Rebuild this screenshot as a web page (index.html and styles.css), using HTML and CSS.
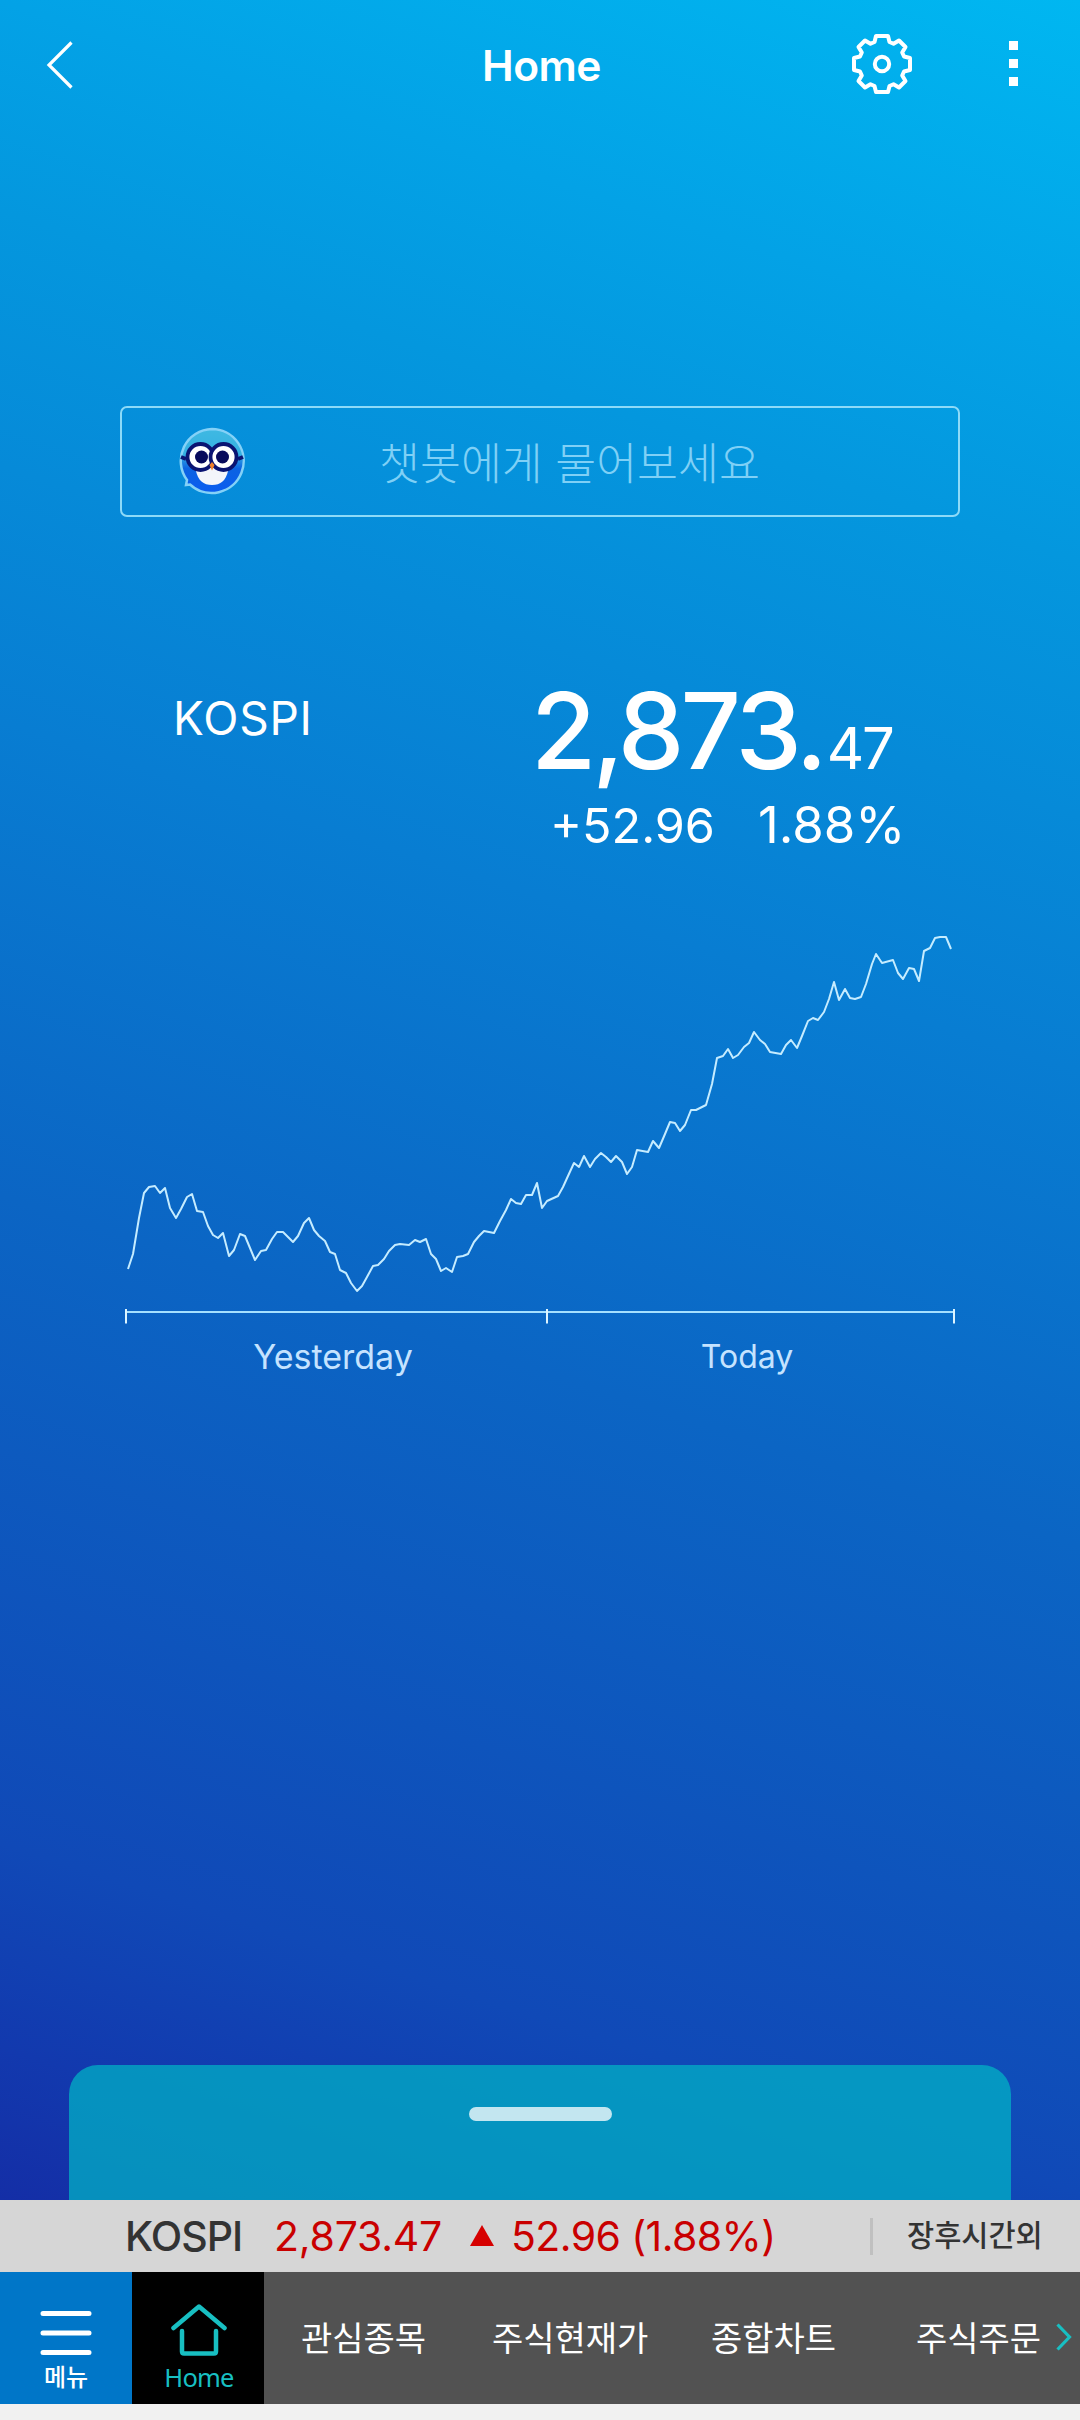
FILE: index.html
```html
<!DOCTYPE html>
<html lang="ko">
<head>
<meta charset="utf-8">
<title>Home</title>
<link rel="stylesheet" href="styles.css">
</head>
<body>
<div class="app">
  <main class="screen">
    <header class="topbar">
      <svg class="back" viewBox="0 0 28 48"><path d="M25.500 1.500 3 24 25.500 46.500"/></svg>
      <h1><span class="fit title">Home</span></h1>
      <svg class="gear" viewBox="0 0 60 60"><path d="M24 2h12l1.500 6 4 1.800 5.500-3.300 6.500 6.500-3.300 5.500 1.800 4 6 1.500v12l-6 1.500-1.800 4 3.300 5.500-6.500 6.500-5.500-3.300-4 1.800-1.500 6H24l-1.500-6-4-1.800-5.500 3.300L6.500 47l3.300-5.500-1.800-4L2 36V24l6-1.500 1.800-4L6.500 13 13 6.500l5.500 3.300 4-1.800z"/><circle cx="30" cy="30" r="7.200"/></svg>
      <svg class="more" viewBox="0 0 9 45"><path d="M0 0h9v9H0zM0 18h9v9H0zM0 36h9v9H0z"/></svg>
    </header>

    <div class="chatbot">
      <svg class="owl" viewBox="0 0 68 68">
        <defs><linearGradient id="body" x1="0" y1="0" x2="0" y2="1"><stop offset="0" stop-color="#3fb9e2"/><stop offset=".4" stop-color="#34b0e2"/><stop offset=".62" stop-color="#0c63e2"/><stop offset="1" stop-color="#0a5cf0"/></linearGradient></defs>
        <path d="M34 2a32 32 0 1 1-22 55.500l-4 .5 1-5A32 32 0 0 1 34 2z" fill="url(#body)" stroke="#84d1f7" stroke-width="2.500"/>
        <path d="M18 44q16-11 32 0-3 14-16 14T18 44z" fill="#f3f5fa"/>
        <path d="M3 30l5 2M65 30l-5 2" stroke="#0a1472" stroke-width="4"/>
        <circle cx="22.500" cy="30" r="13" fill="#fff" stroke="#0a1472" stroke-width="3.800"/>
        <circle cx="45.500" cy="30" r="13" fill="#fff" stroke="#0a1472" stroke-width="3.800"/>
        <circle cx="23.500" cy="30" r="6.500" fill="#070a5c"/><circle cx="44.500" cy="30" r="6.500" fill="#070a5c"/>
        <path d="M31.500 38l2.500-3 2.500 3-2.500 5.500z" fill="#f0822c"/>
      </svg>
      <span class="fit ask">챗봇에게 물어보세요</span>
    </div>

    <section class="index">
      <h2><span class="fit name">KOSPI</span></h2>
      <div class="quote">
        <div class="price"><span class="fit whole">2,873.</span><span class="fit cents">47</span></div>
        <div class="change"><span class="fit diff">+52.96</span><span class="fit rate">1.88%</span></div>
      </div>
    </section>

    <section class="chart">
      <svg viewBox="120 920 840 410">
        <path class="series" d="M128 1269 133 1254 139 1218 144 1193 149 1187 155 1186 160 1193 165 1188 170 1208 176 1218 181 1209 187 1197 192 1194 197 1211 203 1212 208 1226 213 1235 218 1238 223 1233 229 1256 234 1250 240 1234 245 1236 250 1248 255 1260 261 1251 266 1250 272 1239 277 1232 283 1232 288 1237 293 1242 298 1236 304 1223 309 1218 314 1230 319 1236 325 1241 330 1252 335 1254 340 1270 346 1273 351 1283 357 1291 362 1286 367 1277 373 1266 378 1265 384 1259 389 1251 395 1245 400 1244 409 1245 415 1240 420 1242 426 1239 431 1254 436 1259 441 1271 446 1268 452 1272 457 1257 463 1256 468 1254 474 1242 479 1236 484 1231 494 1233 500 1221 506 1210 511 1199 516 1203 521 1204 526 1195 532 1195 537 1183 542 1208 547 1201 558 1196 563 1187 568 1176 574 1163 579 1167 584 1156 590 1167 595 1159 601 1153 606 1157 611 1162 616 1156 622 1162 627 1174 632 1167 637 1150 648 1152 653 1141 659 1148 665 1134 670 1122 675 1123 680 1131 685 1125 691 1110 696 1110 706 1105 712 1084 717 1058 723 1056 728 1049 733 1058 738 1055 744 1047 749 1043 754 1032 760 1040 765 1044 770 1052 781 1054 786 1045 791 1040 797 1048 802 1036 808 1021 813 1018 818 1020 824 1012 829 999 834 982 839 1000 845 989 850 998 855 999 861 997 866 984 872 964 876 954 882 963 893 960 898 973 903 979 909 968 914 969 919 981 924 951 930 948 935 938 940 937 946 937 951 949"/>
        <path class="axis" d="M126 1312H954"/><path class="tick" d="M126 1309v14.500M547 1309v14.500M954 1309v14.500"/>
      </svg>
      <div class="days"><div><span class="fit yday">Yesterday</span></div><div><span class="fit tday">Today</span></div></div>
    </section>

    <div class="sheet"><i class="handle"></i></div>
  </main>

  <div class="ticker">
    <div class="t-main">
      <span class="fit t-name">KOSPI</span>
      <span class="fit t-price">2,873.47</span>
      <svg class="up" viewBox="0 0 24 21"><path d="M12 0l12 21H0z"/></svg>
      <span class="fit t-diff">52.96 (1.88%)</span>
    </div>
    <div class="session"><span class="fit t-session">장후시간외</span></div>
  </div>

  <nav class="nav">
    <div class="tile menu">
      <svg viewBox="0 0 52 44"><path d="M3 2.500h46M3 22h46M3 41.500h46"/></svg>
      <span class="fit n-menu">메뉴</span>
    </div>
    <div class="tile home">
      <svg viewBox="0 0 56 52"><path d="M2.500 24 28 2.500 53.500 24M11 27v20.500q0 2 2 2h30q2 0 2-2V27"/></svg>
      <span class="fit n-home">Home</span>
    </div>
    <div class="links">
      <span class="fit l1">관심종목</span><span class="fit l2">주식현재가</span><span class="fit l3">종합차트</span><span class="fit l4">주식주문</span>
      <svg class="next" viewBox="0 0 17 28"><path d="M1.500 1.500 13.500 14 1.500 26.500"/></svg>
    </div>
  </nav>
</div>
</body>
</html>
```
FILE: styles.css
```css
* { box-sizing: border-box; margin: 0; padding: 0; }
body { width: 1080px; height: 2420px; overflow: hidden; background: #f1f1f1; color: #fff; font-family: "Inter", "Noto Sans CJK KR", sans-serif; }
svg { display: block; fill: none; flex: none; }
.app { height: 2404px; display: flex; flex-direction: column; }
.fit { display: inline-block; white-space: nowrap; }
h1, h2 { font-weight: 400; }

.screen { height: 2200px; display: flex; flex-direction: column; background: linear-gradient(198deg, #00b7f1 0%, #03a2e6 13.8%, #0497de 22%, #087dd2 42%, #0b65c4 60.6%, #1049b7 86%, #1239ae 94%, #142ea6 100%); }
.topbar { height: 127px; padding: 0 62px 0 46px; display: flex; align-items: center; }
.back { width: 28px; height: 48px; margin-top: 2px; stroke: #fff; stroke-width: 3.200; }
.topbar h1 { flex: 1; padding: 9px 0 0 408px; line-height: 60px; }
.title { font-size: 42.500px; font-weight: 600; letter-spacing: -.5px; }
.gear { width: 60px; height: 60px; stroke: #fff; stroke-width: 4; stroke-linejoin: round; margin-right: 97px; }
.more { width: 9px; height: 45px; fill: #fff; }

.chatbot { margin: 279px 120px 0; height: 111px; border: 2px solid #8ddaf8; border-radius: 7px; display: flex; align-items: center; padding-left: 56px; }
.owl { width: 68px; height: 68px; margin-bottom: 2px; }
.ask { margin: 0 0 3px 133px; font-family: "Noto Sans CJK KR", sans-serif; font-weight: 300; font-size: 44.500px; color: #7fd0f6; }

.index { height: 178px; margin-top: 163px; padding: 0 167px 0 173px; display: flex; justify-content: space-between; }
.name { font-size: 46px; line-height: 76px; letter-spacing: .8px; }
.quote { width: 384px; padding-left: 6px; }
.price { display: flex; align-items: baseline; height: 110px; line-height: 102px; margin-left: -4px; }
.whole { font-size: 106px; font-weight: 500; letter-spacing: -4px; }
.cents { font-size: 58px; letter-spacing: -2px; margin-left: 3px; }
.change { display: flex; align-items: baseline; gap: 43px; line-height: 70px; padding-left: 15px; }
.diff { font-size: 48.500px; }
.rate { font-size: 51px; }

.chart { margin-top: 62px; padding: 0 120px; }
.chart svg { width: 840px; height: 410px; }
.series { stroke: #c5ecff; stroke-width: 2; stroke-linejoin: round; }
.axis { stroke: #a5e0ff; stroke-width: 2.200; }
.tick { stroke: #dcf4ff; stroke-width: 2; }
.days { display: flex; padding-left: 6px; color: #c5e3ff; line-height: 54px; }
.days div { width: 414px; text-align: center; }
.yday { font-size: 34px; }
.tday { font-size: 32px; }

.sheet { margin: auto 69px 0; height: 135px; border-radius: 29px 29px 0 0; background: rgba(2, 179, 197, .73); padding-top: 42px; }
.handle { display: block; width: 143px; height: 14px; margin: 0 auto; border-radius: 7px; background: #c3e6f0; }

.ticker { height: 72px; background: #d6d6d6; display: flex; align-items: center; color: #c90000; }
.t-main { flex: 1; display: flex; align-items: center; padding-left: 125px; }
.t-name { font-size: 41px; color: #333; width: 149px; font-weight: 500; letter-spacing: -1px; }
.t-price { font-size: 41px; width: 196px; letter-spacing: -.2px; }
.up { width: 24px; height: 21px; fill: #d60000; margin: 0 17px 2px 0; }
.t-diff { font-size: 41px; letter-spacing: -.6px; }
.session { width: 210px; border-left: 3px solid #c0c0c0; height: 37px; line-height: 35px; padding-left: 34px; color: #333; }
.t-session { font-size: 29.500px; font-weight: 500; }

.nav { height: 132px; background: #525252; display: flex; }
.tile { width: 132px; display: flex; flex-direction: column; align-items: center; }
.menu { background: #0076c8; padding-top: 39px; }
.menu svg { width: 52px; height: 44px; stroke: #fff; stroke-width: 5; stroke-linecap: round; }
.home { background: #000; color: #18bfc2; padding: 32px 0 0 2px; }
.home svg { width: 56px; height: 52px; stroke: #18bfc2; stroke-width: 4.500; stroke-linecap: round; stroke-linejoin: round; }
.n-menu { font-size: 24px; line-height: 46px; font-weight: 500; }
.n-home { font-size: 25.500px; line-height: 42px; font-family: "Noto Sans", sans-serif; letter-spacing: -.8px; }
.links { flex: 1; display: flex; align-items: center; padding: 0 0 3px 37px; font-size: 34px; }
.l1 { width: 191px; } .l2 { width: 219px; } .l3 { width: 205px; } .l4 { width: 140px; }
.next { width: 17px; height: 28px; stroke: #18bfc2; stroke-width: 3.200; }
```
